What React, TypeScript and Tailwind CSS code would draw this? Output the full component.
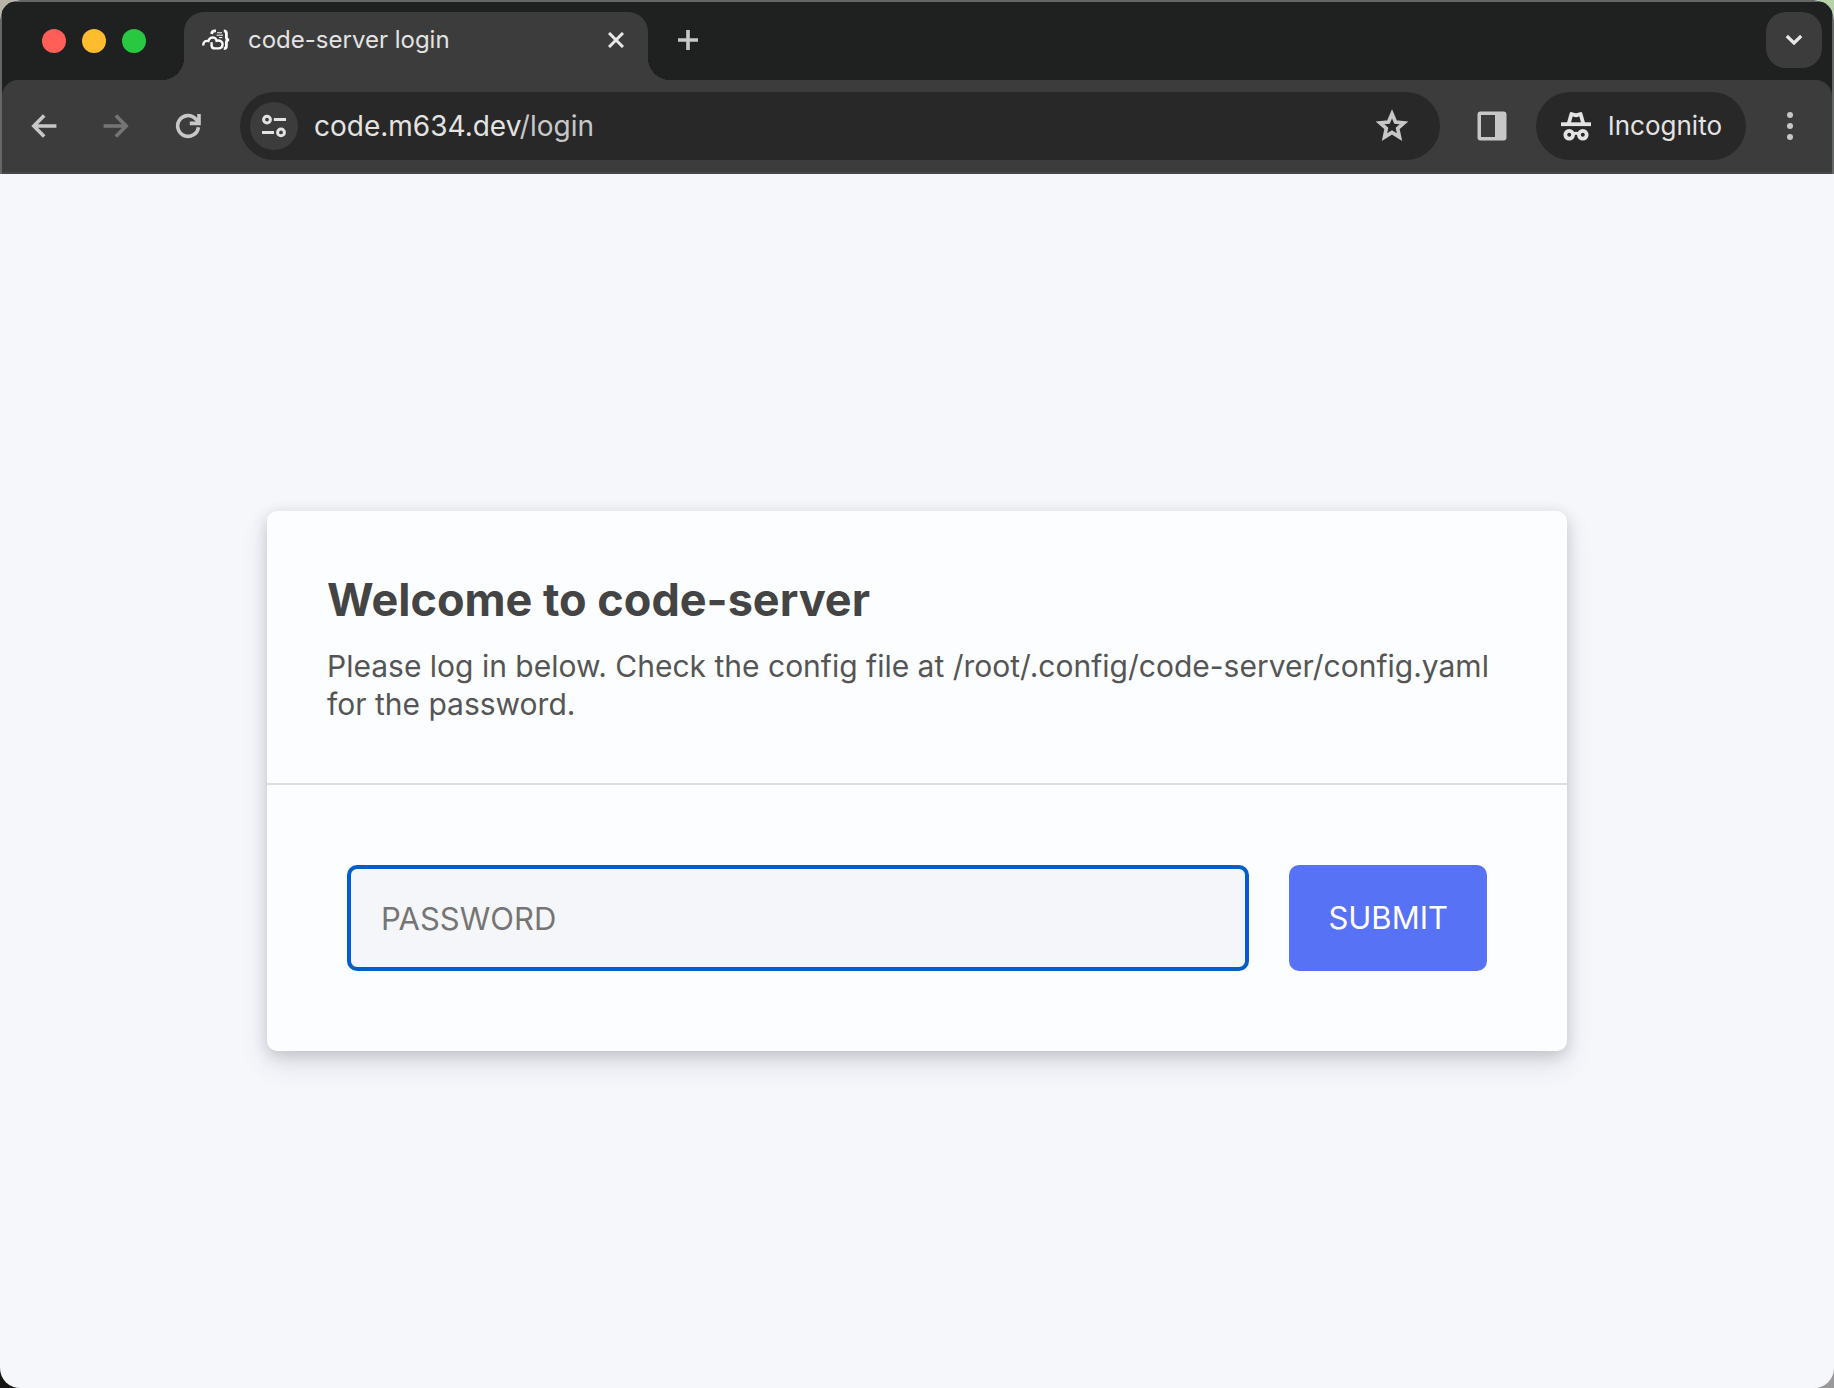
import type { ReactNode } from "react";

function CodeServerIcon() {
  return (
    <svg className="h-[22px] w-7 shrink-0" viewBox="0 0 28 22" fill="none" stroke="#fafafa" strokeWidth="2.4" aria-hidden="true">
      <path d="M1.2 16.4C1.2 12.8 3.4 11.4 6.4 12C7.2 9 9.6 8 11.8 8.6C13.6 9.1 14.4 10.4 14.6 11.8C18 10.8 20.8 12.6 20.6 15.4C20.4 18.2 18.6 19.4 16.4 19.4H13C10.8 19.4 9.6 18.4 9.6 16.4V13.2" />
      <path d="M14 1.8H12.8C10.8 1.8 9.8 2.8 9.6 5" strokeWidth="2.8" />
      <path d="M21.8 1.8C23.8 1.8 24.4 2.6 24.4 4.6V8.4C24.4 9.8 25.2 10.7 27 10.9C25.2 11.1 24.4 12 24.4 13.4V17C24.4 18.8 23.8 19.7 21.8 19.7" strokeWidth="2.8" />
      <path d="M15 3.8H20M14.6 6.2H21M17 8.6H20.4" strokeWidth="1" />
    </svg>
  );
}

function BackIcon() {
  return (
    <svg className="size-7" viewBox="0 0 28 28" fill="none" stroke="currentColor" strokeWidth="3.6" aria-hidden="true">
      <path d="M26.4 14H5M14.2 3.4L3.8 14L14.2 24.6" />
    </svg>
  );
}

function ForwardIcon() {
  return (
    <svg className="size-7" viewBox="0 0 28 28" fill="none" stroke="currentColor" strokeWidth="3.6" aria-hidden="true">
      <path d="M1.6 14H23M13.8 3.4L24.2 14L13.8 24.6" />
    </svg>
  );
}

function ReloadIcon() {
  return (
    <svg className="size-7" viewBox="0 0 28 28" fill="none" stroke="currentColor" strokeWidth="3.6" aria-hidden="true">
      <path d="M24.4 15.2A10.4 10.4 0 1 1 21.6 6.8L25 10.6" />
      <path d="M25 2V11.4H15.8" />
    </svg>
  );
}

function TuneIcon() {
  return (
    <svg className="size-7" viewBox="0 0 28 28" fill="none" stroke="#e3e3e3" strokeWidth="3" aria-hidden="true">
      <circle cx="7" cy="7.6" r="3.4" />
      <path d="M13.8 7.6H26M2 20.4H14" />
      <circle cx="21" cy="20.4" r="3.4" />
    </svg>
  );
}

function StarIcon() {
  return (
    <svg className="size-10" viewBox="0 0 24 24" fill="none" stroke="currentColor" strokeWidth="2.2" aria-hidden="true">
      <path d="M12 4.7L14.1 9.6L19.2 10.1L15.4 13.5L16.5 18.7L12 15.9L7.5 18.7L8.6 13.5L4.8 10.1L9.9 9.6Z" />
    </svg>
  );
}

function SidePanelIcon() {
  return (
    <svg className="size-[30px]" viewBox="0 0 30 30" aria-hidden="true">
      <path
        fill="#c7c7c7"
        fillRule="evenodd"
        d="M3.5 .5H26.5A3 3 0 0 1 29.5 3.5V26.5A3 3 0 0 1 26.5 29.5H3.5A3 3 0 0 1 .5 26.5V3.5A3 3 0 0 1 3.5 .5ZM4 4V26H18V4Z"
      />
    </svg>
  );
}

function IncognitoIcon() {
  return (
    <svg className="h-[30px] w-8 shrink-0" viewBox="0 0 32 30" fill="none" stroke="#e3e3e3" aria-hidden="true">
      <path d="M1 13.2H31" strokeWidth="3.8" />
      <path d="M8.6 13L11.4 3L16 4.4L20.6 3L23.4 13" strokeWidth="3.8" strokeLinejoin="round" />
      <circle cx="9.2" cy="23.8" r="3.9" strokeWidth="3.8" />
      <circle cx="22.8" cy="23.8" r="3.9" strokeWidth="3.8" />
      <path d="M13 23Q16 21.6 19 23" strokeWidth="3" />
    </svg>
  );
}

function ToolButton({ label, className = "", children }: { label: string; className?: string; children?: ReactNode }) {
  return (
    <button type="button" aria-label={label} className={`flex shrink-0 items-center justify-center ${className}`}>
      {children}
    </button>
  );
}

function TabStrip() {
  return (
    <div className="flex h-[78px] items-end bg-[#1f2120]">
      <div className="flex h-[78px] items-center gap-4 pl-10">
        <ToolButton label="Close window" className="size-6 rounded-full bg-[#ff5f57]" />
        <ToolButton label="Minimize window" className="size-6 rounded-full bg-[#febc2e]" />
        <ToolButton label="Zoom window" className="size-6 rounded-full bg-[#28c840]" />
      </div>
      <div className="relative ml-[38px] flex h-[68px] w-[464px] items-center rounded-t-[20px] bg-[#3c3c3c] pr-6 pb-3 pl-[18px]">
        <span className="absolute bottom-0 -left-[22px] size-[22px] bg-[radial-gradient(circle_at_top_left,transparent_22px,#3c3c3c_22px)]" />
        <span className="absolute -right-[22px] bottom-0 size-[22px] bg-[radial-gradient(circle_at_top_right,transparent_22px,#3c3c3c_22px)]" />
        <CodeServerIcon />
        <span className="ml-[18px] grow text-2xl text-[#e3e3e3]">code-server login</span>
        <ToolButton label="Close tab">
          <svg className="size-4" viewBox="0 0 16 16" stroke="#e8e8e8" strokeWidth="3" aria-hidden="true">
            <path d="M1 1L15 15M15 1L1 15" />
          </svg>
        </ToolButton>
      </div>
      <ToolButton label="New tab" className="mb-[30px] ml-[30px]">
        <svg className="size-5" viewBox="0 0 20 20" stroke="#c7c7c7" strokeWidth="3.6" aria-hidden="true">
          <path d="M10 0V20M0 10H20" />
        </svg>
      </ToolButton>
      <ToolButton label="Search tabs" className="mr-2.5 mb-3 ml-auto size-14 rounded-[20px] bg-[#3c3c3c]">
        <svg className="h-3 w-[18px]" viewBox="0 0 18 12" fill="none" stroke="#e8e8e8" strokeWidth="3.2" aria-hidden="true">
          <path d="M1.8 2L9 9L16.2 2" />
        </svg>
      </ToolButton>
    </div>
  );
}

function Toolbar() {
  return (
    <div className="bg-[#1f2120]">
      <div className="flex h-[94px] items-center rounded-t-2xl border-b-2 border-[#464847] bg-[#3c3c3c] pr-9 pb-px pl-7 text-[#c7c7c7]">
        <div className="flex gap-11">
          <ToolButton label="Back"><BackIcon /></ToolButton>
          <ToolButton label="Forward" className="text-[#757575]"><ForwardIcon /></ToolButton>
          <ToolButton label="Reload"><ReloadIcon /></ToolButton>
        </div>
        <div className="ml-[38px] flex h-[68px] min-w-0 grow items-center rounded-full bg-[#282828] pr-7 pl-2.5">
          <ToolButton label="View site information" className="size-12 rounded-full bg-[#3c3c3c]"><TuneIcon /></ToolButton>
          <a href="#login" className="ml-4 grow text-[28px] text-[#c7c7c7]">
            <span className="text-[#e3e3e3]">code.m634.dev</span>/login
          </a>
          <ToolButton label="Bookmark this tab"><StarIcon /></ToolButton>
        </div>
        <ToolButton label="Side panel" className="ml-[37px]"><SidePanelIcon /></ToolButton>
        <button type="button" className="ml-[29px] flex h-[68px] shrink-0 items-center gap-4 rounded-full bg-[#282828] px-6 text-[26px] text-[#e3e3e3]">
          <IncognitoIcon />
          Incognito
        </button>
        <ToolButton label="Menu" className="ml-[38px]">
          <svg className="h-7 w-3" viewBox="0 0 12 28" fill="#c7c7c7" aria-hidden="true">
            <circle cx="6" cy="3" r="3" />
            <circle cx="6" cy="14" r="3" />
            <circle cx="6" cy="25" r="3" />
          </svg>
        </ToolButton>
      </div>
    </div>
  );
}

function LoginCard() {
  return (
    <section className="w-full max-w-[1300px] rounded-[10px] bg-[#fcfdff] shadow-[0_14px_28px_rgba(60,66,87,0.12),0_4px_16px_rgba(0,0,0,0.16)]">
      <header className="border-b-2 border-[#dcdddf] p-[60px]">
        <h1 className="text-[45px] leading-[58px] font-bold text-[#444]">Welcome to code-server</h1>
        <p className="mt-[18px] text-[30px] leading-[38px] text-[#555]">
          Please log in below. Check the config file at /root/.config/code-server/config.yaml for the password.
        </p>
      </header>
      <form className="flex gap-10 p-20" onSubmit={(e) => e.preventDefault()}>
        <input
          type="password"
          aria-label="Password"
          placeholder="PASSWORD"
          className="h-[106px] min-w-0 grow rounded-[10px] border-4 border-[#005fcc] bg-[#f5f6fa] px-[30px] text-[31px] text-[#444] outline-none placeholder:text-[#757575]"
        />
        <button type="submit" className="h-[106px] rounded-[10px] bg-[#5872f5] px-[39px] text-[31px] text-white">
          SUBMIT
        </button>
      </form>
    </section>
  );
}

export default function App() {
  return (
    <div className="h-screen bg-[conic-gradient(#b5d3a7_90deg,#999_90deg_180deg,#151515_180deg_270deg,#b9b4a8_270deg)] font-['Inter',sans-serif]">
      <div className="flex h-full flex-col overflow-hidden rounded-[20px] bg-[#f5f7fb]">
        <div className="rounded-t-[20px] border-2 border-b-0 border-[#646766] bg-[#1f2120]">
          <TabStrip />
          <Toolbar />
        </div>
        <main className="flex grow items-center justify-center px-10">
          <LoginCard />
        </main>
      </div>
    </div>
  );
}
